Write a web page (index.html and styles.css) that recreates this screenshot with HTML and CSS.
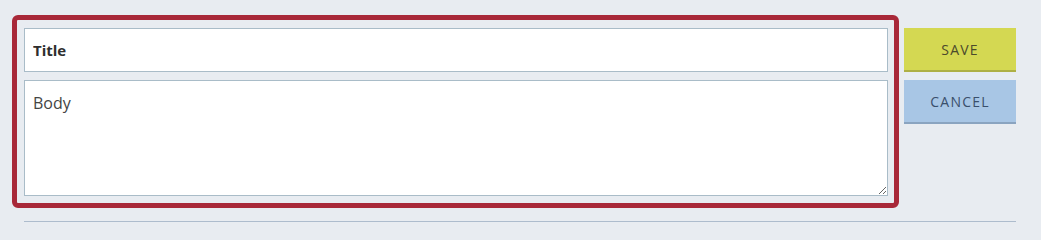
FILE: index.html
```html
<!DOCTYPE html>
<html>
<head>
<meta charset="utf-8">
<link rel="stylesheet" href="styles.css">
</head>
<body>
<div class="page">
  <div class="row">
    <form class="editor">
      <input class="title" type="text" placeholder="Title">
      <textarea class="body" placeholder="Body"></textarea>
    </form>
    <div class="actions">
      <button class="btn save" type="button">SAVE</button>
      <button class="btn cancel" type="button">CANCEL</button>
    </div>
  </div>
  <hr class="divider">
</div>
</body>
</html>
```

FILE: styles.css
```css
html, body {
  margin: 0;
  padding: 0;
  background: #e8ecf1;
}
body {
  font-family: "Open Sans", "Liberation Sans", sans-serif;
}
.page {
  padding-top: 15px;
  width: 1041px;
  height: 240px;
  box-sizing: border-box;
}
.row {
  display: flex;
  align-items: flex-start;
  margin-left: 12px;
}
.editor {
  box-sizing: border-box;
  width: 887px;
  height: 193px;
  margin: 0;
  border: 5px solid #a82839;
  border-radius: 6px;
  padding: 8px 6px 7px 7px;
  display: flex;
  flex-direction: column;
  gap: 8px;
}
.title, .body {
  box-sizing: border-box;
  width: 864px;
  margin: 0;
  border: 1px solid #a9bcc8;
  background: #fff;
  font-family: "Open Sans", "Liberation Sans", sans-serif;
  color: #333;
  outline: none;
}
.title {
  height: 44px;
  padding: 0 8px;
  font-size: 15px;
  font-weight: 700;
}
.title::placeholder {
  color: #2e2e2e;
  font-weight: 700;
  opacity: 1;
}
.body {
  height: 117px;
  padding: 11px 8px;
  font-size: 16px;
  resize: vertical;
}
.body::placeholder {
  color: #444;
  opacity: 1;
}
.actions {
  display: flex;
  flex-direction: column;
  gap: 8px;
  margin-left: 5px;
  margin-top: 13px;
}
.btn {
  box-sizing: border-box;
  width: 112px;
  height: 44px;
  border: 0;
  border-bottom: 2px solid;
  padding: 0;
  font-family: "Open Sans", "Liberation Sans", sans-serif;
  font-size: 14px;
  letter-spacing: 1.2px;
  cursor: pointer;
}
.save {
  background: #d4d852;
  border-bottom-color: #aeb044;
  color: #4b4a2c;
}
.cancel {
  background: #a8c6e5;
  border-bottom-color: #8aa4c0;
  color: #3a4f6b;
}
.divider {
  margin: 13px 0 0 24px;
  width: 992px;
  border: 0;
  border-top: 1px solid #adbccd;
  height: 0;
}
```
